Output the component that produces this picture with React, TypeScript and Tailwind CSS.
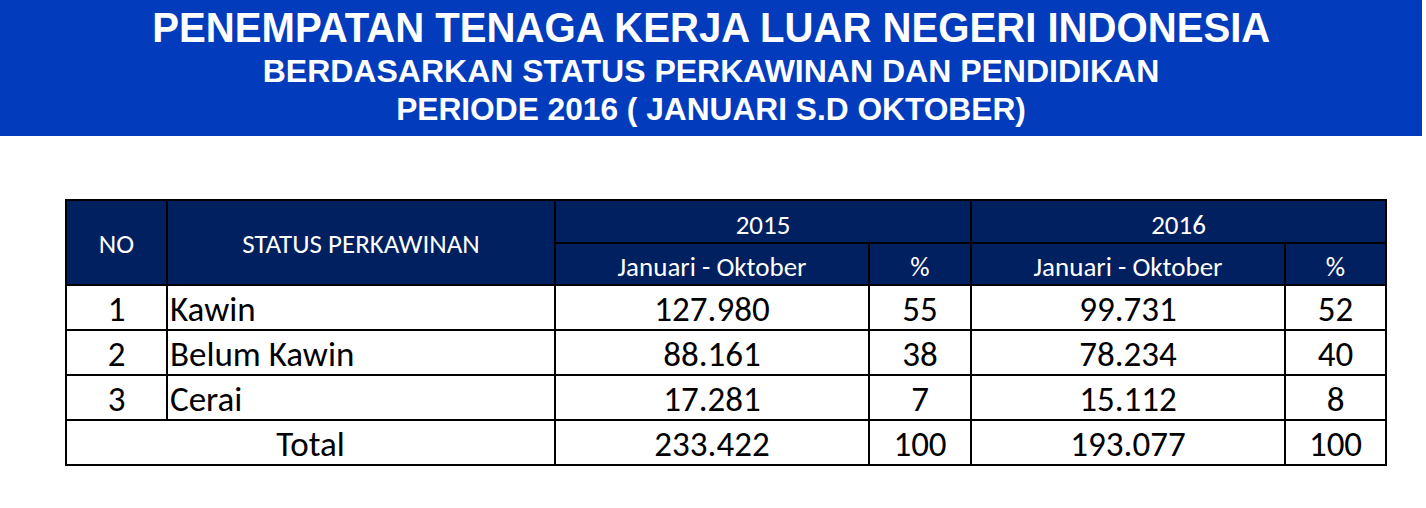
import React from 'react';

const rows = [
  { no: '1', status: 'Kawin', a: '127.980', ap: '55', b: '99.731', bp: '52' },
  { no: '2', status: 'Belum Kawin', a: '88.161', ap: '38', b: '78.234', bp: '40' },
  { no: '3', status: 'Cerai', a: '17.281', ap: '7', b: '15.112', bp: '8' },
];

const App: React.FC = () => {
  return (
    <div className="w-[1426px] h-[508px] bg-white overflow-hidden">
      {/* Banner */}
      <div className="w-[1422px] h-[136px] bg-[#023cbc] flex flex-col items-center pt-[4px] text-white font-bold font-['Liberation_Sans',sans-serif]">
        <h1 className="text-[42px] leading-[48px] scale-x-[0.955]">PENEMPATAN TENAGA KERJA LUAR NEGERI INDONESIA</h1>
        <h2 className="text-[32px] leading-[36px] mt-[1px]">BERDASARKAN STATUS PERKAWINAN DAN PENDIDIKAN</h2>
        <h2 className="text-[32px] leading-[38px] mt-[1px] scale-x-[0.99]">PERIODE 2016 ( JANUARI S.D OKTOBER)</h2>
      </div>

      {/* Table */}
      <div className="pt-[63px] pl-[65px]">
        <table className="border-collapse border-2 border-black table-fixed w-[1322px] font-['Carlito','Lato',sans-serif] text-black">
          <colgroup>
            <col className="w-[101px]" />
            <col className="w-[388px]" />
            <col className="w-[314px]" />
            <col className="w-[102px]" />
            <col className="w-[314px]" />
            <col className="w-[101px]" />
          </colgroup>
          <thead className="bg-[#002060] text-white text-[27px] leading-[32px]">
            <tr className="h-[43px]">
              <th rowSpan={2} className="border-2 border-black font-normal pt-[2px]">NO</th>
              <th rowSpan={2} className="border-2 border-black font-normal pt-[2px]">STATUS PERKAWINAN</th>
              <th colSpan={2} className="border-2 border-black font-normal pt-[6px]">2015</th>
              <th colSpan={2} className="border-2 border-black font-normal pt-[6px]">2016</th>
            </tr>
            <tr className="h-[42px]">
              <th className="border-2 border-black font-normal pt-[6px]">Januari - Oktober</th>
              <th className="border-2 border-black font-normal pt-[6px]">%</th>
              <th className="border-2 border-black font-normal pt-[6px]">Januari - Oktober</th>
              <th className="border-2 border-black font-normal pt-[6px]">%</th>
            </tr>
          </thead>
          <tbody className="text-[35px] leading-[40px]">
            {rows.map((r) => (
              <tr key={r.no} className="h-[45px]">
                <td className="border-2 border-black text-center pt-[2px]">{r.no}</td>
                <td className="border-2 border-black pl-[2px] pt-[2px]">{r.status}</td>
                <td className="border-2 border-black text-center pt-[2px]">{r.a}</td>
                <td className="border-2 border-black text-center pt-[2px]">{r.ap}</td>
                <td className="border-2 border-black text-center pt-[2px]">{r.b}</td>
                <td className="border-2 border-black text-center pt-[2px]">{r.bp}</td>
              </tr>
            ))}
            <tr className="h-[45px]">
              <td colSpan={2} className="border-2 border-black text-center pt-[2px]">Total</td>
              <td className="border-2 border-black text-center pt-[2px]">233.422</td>
              <td className="border-2 border-black text-center pt-[2px]">100</td>
              <td className="border-2 border-black text-center pt-[2px]">193.077</td>
              <td className="border-2 border-black text-center pt-[2px]">100</td>
            </tr>
          </tbody>
        </table>
      </div>
    </div>
  );
};

export default App;
